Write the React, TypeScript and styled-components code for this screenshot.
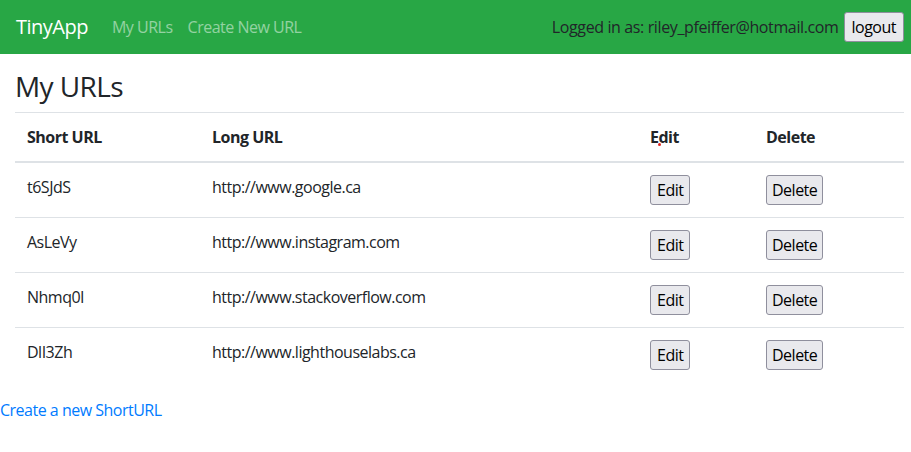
import React from "react";
import styled, { createGlobalStyle } from "styled-components";

const Global = createGlobalStyle`
  html, body { margin: 0; padding: 0; background: #fff; }
  body {
    font-family: "Open Sans", "Noto Sans", sans-serif;
    font-size: 16px;
    line-height: 1.5;
    letter-spacing: -0.5px;
    color: #212529;
  }
  * { box-sizing: border-box; }
`;

const Navbar = styled.nav`
  display: flex;
  align-items: center;
  justify-content: space-between;
  height: 54px;
  padding: 0 7px 0 16px;
  background: #28a745;
`;

const NavLeft = styled.div`
  display: flex;
  align-items: center;
`;

const Brand = styled.a`
  font-size: 20px;
  color: #fff;
  text-decoration: none;
  margin-right: 24px;
`;

const NavLink = styled.a`
  color: rgba(255, 255, 255, 0.5);
  text-decoration: none;
  margin-right: 15px;
  font-size: 16px;
`;

const NavRight = styled.div`
  display: flex;
  align-items: center;
  gap: 5px;
`;

const UserText = styled.span`
  color: #212529;
  letter-spacing: -0.38px;
`;

const PlainButton = styled.button<{ $px?: number }>`
  font: inherit;
  font-size: 16px;
  line-height: 24px;
  letter-spacing: -0.5px;
  color: #000;
  background: #e9e9ed;
  border: 1px solid #8f8f9d;
  border-radius: 3px;
  padding: 2px ${(p) => p.$px ?? 5}px;
  cursor: pointer;
`;

const Main = styled.main`
  padding: 0 7px 0 15px;
`;

const Title = styled.h3`
  font-size: 28px;
  font-weight: 500;
  line-height: 1.2;
  letter-spacing: -0.6px;
  margin: 16px 0 8px 0;
`;

const Table = styled.table`
  width: 100%;
  border-collapse: collapse;
  margin-bottom: 16px;
`;

const Th = styled.th<{ $w?: number }>`
  position: relative;
  text-align: left;
  font-weight: 700;
  padding: 12px;
  border-top: 1px solid #dee2e6;
  border-bottom: 2px solid #dee2e6;
  vertical-align: bottom;
  width: ${(p) => (p.$w ? `${p.$w}px` : "auto")};
`;

const Td = styled.td`
  padding: 12px;
  border-top: 1px solid #dee2e6;
  vertical-align: top;
`;

const RedDot = styled.span`
  position: absolute;
  left: 20px;
  top: 30px;
  width: 3px;
  height: 3px;
  border-radius: 50%;
  background: #e0201c;
`;

const CreateLink = styled.a`
  color: #007bff;
  text-decoration: none;
`;

const rows = [
  ["t6SJdS", "http://www.google.ca"],
  ["AsLeVy", "http://www.instagram.com"],
  ["Nhmq0I", "http://www.stackoverflow.com"],
  ["DlI3Zh", "http://www.lighthouselabs.ca"],
];

export default function App() {
  return (
    <>
      <Global />
      <Navbar>
        <NavLeft>
          <Brand href="#">TinyApp</Brand>
          <NavLink href="#">My URLs</NavLink>
          <NavLink href="#">Create New URL</NavLink>
        </NavLeft>
        <NavRight>
          <UserText>Logged in as: riley_pfeiffer@hotmail.com</UserText>
          <PlainButton $px={7}>logout</PlainButton>
        </NavRight>
      </Navbar>
      <Main>
        <Title>My URLs</Title>
        <Table>
          <thead>
            <tr>
              <Th $w={185}>Short URL</Th>
              <Th $w={438}>Long URL</Th>
              <Th $w={116}>
                Edit
                <RedDot />
              </Th>
              <Th>Delete</Th>
            </tr>
          </thead>
          <tbody>
            {rows.map(([s, l]) => (
              <tr key={s}>
                <Td>{s}</Td>
                <Td>{l}</Td>
                <Td>
                  <PlainButton $px={6}>Edit</PlainButton>
                </Td>
                <Td>
                  <PlainButton>Delete</PlainButton>
                </Td>
              </tr>
            ))}
          </tbody>
        </Table>
      </Main>
      <CreateLink href="#">Create a new ShortURL</CreateLink>
    </>
  );
}
